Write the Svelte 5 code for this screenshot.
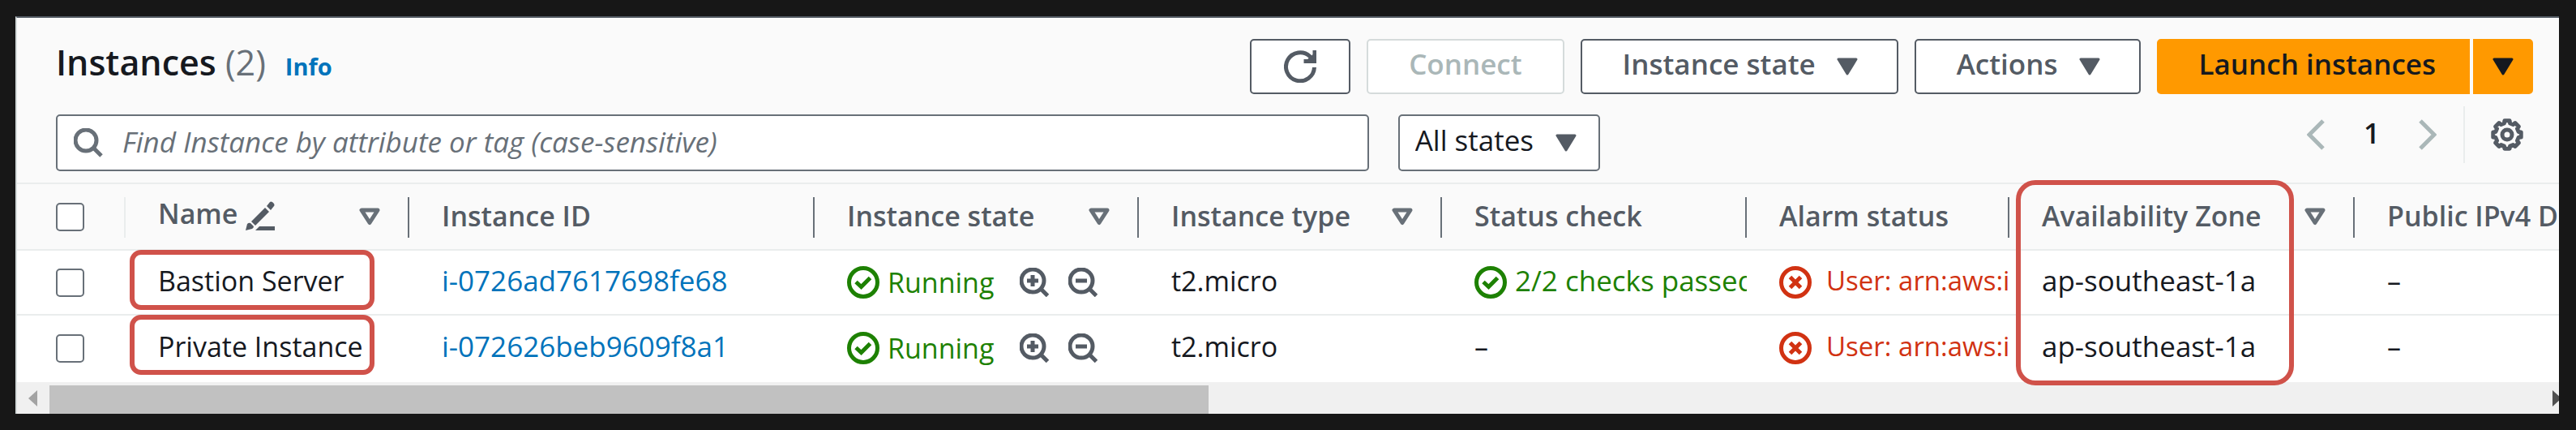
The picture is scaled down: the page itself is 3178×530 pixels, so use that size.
<script>
  const headers = [
    { label: 'Name', edit: true, filter: true },
    { label: 'Instance ID' },
    { label: 'Instance state', filter: true },
    { label: 'Instance type', filter: true },
    { label: 'Status check' },
    { label: 'Alarm status' },
    { label: 'Availability Zone', filter: true, marked: true },
    { label: 'Public IPv4 DNS' }
  ];
  const rows = [
    { name: 'Bastion Server', id: 'i-0726ad7617698fe68', type: 't2.micro', check: '2/2 checks passed', zone: 'ap-southeast-1a' },
    { name: 'Private Instance', id: 'i-072626beb9609f8a1', type: 't2.micro', check: null, zone: 'ap-southeast-1a' }
  ];
  const teeth = 8;
  const point = (r, a) => `${(20 + r * Math.cos(a)).toFixed(2)} ${(20 + r * Math.sin(a)).toFixed(2)}`;
  let gear = '';
  for (let i = 0; i < teeth; i++) {
    const a = (i / teeth) * Math.PI * 2;
    gear += `${i ? 'L' : 'M'}${point(14.5, a - 0.25)}L${point(17.5, a - 0.18)}L${point(17.5, a + 0.18)}L${point(14.5, a + 0.25)}`;
  }
  gear += 'Z';
</script>

{#snippet caret()}
  <svg class="caret" viewBox="0 0 26 22" aria-hidden="true"><path d="M2 2H24L13 20Z" fill="currentColor" stroke="currentColor" stroke-width="3" stroke-linejoin="round" /></svg>
{/snippet}

{#snippet okIcon()}
  <svg class="status" viewBox="0 0 40 40" aria-hidden="true"><circle cx="20" cy="20" r="17.5" /><path d="M11 19.500L17.5 25.500L28.5 14.500" /></svg>
{/snippet}

{#snippet glass(plus)}
  <svg class="glass" viewBox="0 0 36 36" aria-hidden="true"><circle cx="16" cy="16" r="14" /><path d="M26 26L34.500 34.500M9 16H23" />{#if plus}<path d="M16 9V23" />{/if}</svg>
{/snippet}

<main class="page">
  <section class="panel">
    <header class="toolbar">
      <div class="bar">
        <div class="title">
          <h1>Instances <span class="count">(2)</span></h1>
          <a class="info" href="#info">Info</a>
        </div>
        <div class="actions">
          <button class="btn refresh" aria-label="Refresh">
            <svg viewBox="0 0 40 40" aria-hidden="true"><path d="M37.500 21A17.500 17.500 0 1 1 32 7.500L36 12" /><path d="M38 0V13.500H24.500" /><path d="M28 12L37 4V13Z" fill="currentColor" stroke="none" /></svg>
          </button>
          <button class="btn" disabled><span>Connect</span></button>
          <button class="btn menu"><span>Instance state</span>{@render caret()}</button>
          <button class="btn menu"><span>Actions</span>{@render caret()}</button>
          <div class="split">
            <button class="btn primary"><span>Launch instances</span></button>
            <button class="btn primary more" aria-label="More launch options">{@render caret()}</button>
          </div>
        </div>
      </div>
      <div class="filters">
        <label class="search">
          <svg viewBox="0 0 36 36" aria-hidden="true"><circle cx="15" cy="15" r="13" /><path d="M24 24L34 34" /></svg>
          <input type="text" aria-label="Find Instance" placeholder="Find Instance by attribute or tag (case-sensitive)" />
        </label>
        <label class="states">
          <select aria-label="State filter"><option>All states</option></select>
          {@render caret()}
        </label>
        <nav class="pager" aria-label="Pages">
          <button aria-label="Previous page"><svg class="chevron" viewBox="0 0 22 38"><path d="M20 2L3 19L20 36" /></svg></button>
          <span class="current">1</span>
          <button aria-label="Next page"><svg class="chevron" viewBox="0 0 22 38"><path d="M2 2L19 19L2 36" /></svg></button>
          <div class="settings">
            <button aria-label="Preferences"><svg class="gear" viewBox="0 0 40 40"><path d={gear} /><circle cx="20" cy="20" r="6" /></svg></button>
          </div>
        </nav>
      </div>
    </header>

    <table>
      <colgroup>
        <col class="c-select" /><col class="c-name" /><col class="c-id" /><col class="c-state" /><col class="c-type" /><col class="c-check" /><col class="c-alarm" /><col class="c-zone" /><col />
      </colgroup>
      <thead>
        <tr>
          <th class="pick"><input type="checkbox" aria-label="Select all" /></th>
          {#each headers as h}
            <th class:marked={h.marked}>
              <div class="head">
                <span class="label" class:editable={h.edit}>{h.label}
                  {#if h.edit}<svg class="pencil" viewBox="0 0 36 36" aria-hidden="true"><path d="M0 36L2 28Q4 26 6 27L10 31Q10 33 8 34Z" /><path d="M7 25L24 8L29 13L12 30Z" /><path d="M26 6L30 1Q31 0 33 1L35 3Q36 5 35 6L31 11Z" /><path d="M12 36L17 31H36V36Z" /></svg>{/if}
                </span>
                {#if h.filter}<svg class="sort" viewBox="0 0 26 22" aria-hidden="true"><path d="M3 3H23L13 18.500Z" /></svg>{/if}
              </div>
              {#if h.marked}<span class="mark tall"></span>{/if}
            </th>
          {/each}
        </tr>
      </thead>
      <tbody>
        {#each rows as r}
          <tr>
            <td class="pick"><input type="checkbox" aria-label={`Select ${r.name}`} /></td>
            <td class="text named">{r.name}<span class="mark"></span></td>
            <td class="text large"><a href={`#${r.id}`}>{r.id}</a></td>
            <td>
              <div class="cell ok">
                {@render okIcon()}<span>Running</span>
                <button class="zoom first" aria-label="Filter in">{@render glass(true)}</button>
                <button class="zoom" aria-label="Filter out">{@render glass(false)}</button>
              </div>
            </td>
            <td class="text">{r.type}</td>
            {#if r.check}
              <td class="large"><div class="cell ok checks">{@render okIcon()}<span>{r.check}</span></div></td>
            {:else}
              <td class="text">–</td>
            {/if}
            <td class="small">
              <div class="cell bad">
                <svg class="status" viewBox="0 0 40 40" aria-hidden="true"><circle cx="20" cy="20" r="17.5" /><path d="M13.500 13.500L26.500 26.500M26.500 13.500L13.500 26.500" /></svg>
                <span>User: arn:aws:iam</span>
              </div>
            </td>
            <td class="text large">{r.zone}</td>
            <td class="text">–</td>
          </tr>
        {/each}
      </tbody>
    </table>

    <div class="scroll">
      <svg class="arrow" viewBox="0 0 11 20" aria-hidden="true"><path d="M11 0V20L0 10Z" fill="#a3a3a3" /></svg>
      <div class="track"><div class="thumb"></div></div>
      <svg class="arrow end" viewBox="0 0 8 20" aria-hidden="true"><path d="M0 0V20L11 10Z" fill="#505050" /></svg>
    </div>
  </section>
</main>

<style>
  :global(body) { background: #171717; }
  * { box-sizing: border-box; }
  .page {
    padding: 20px 21px 20px 19px;
    font: 34px/46px "Open Sans", "Noto Sans", sans-serif;
    color: #16191f;
  }
  .panel {
    border-top: 2px solid #545b64;
    border-left: 2px solid #d5dbdb;
    background: #fafafa;
    overflow: hidden;
  }
  button, input, select { font: inherit; color: inherit; margin: 0; }
  button { border: 0; background: none; padding: 0; cursor: pointer; }
  svg { display: block; flex: none; fill: none; stroke: currentColor; }
  a { color: #0073bb; text-decoration: none; }

  .toolbar { padding: 26px 32px 14px 48px; border-bottom: 2px solid #eaeded; font-size: 35px; }
  .bar { display: flex; align-items: flex-start; }
  .title { display: flex; align-items: baseline; gap: 24px; }
  h1 { margin: 0; font-size: 43px; line-height: 58px; font-weight: 600; }
  .count { color: #687078; font-weight: 400; }
  .info { font-size: 29px; font-weight: 700; }
  .actions { display: flex; gap: 20px; margin-left: auto; }
  .btn {
    display: flex; align-items: center; justify-content: center; gap: 26px;
    height: 68px; padding: 0 50px; border: 2px solid #545b64; border-radius: 5px;
    background: #fff; color: #545b64; font-weight: 600; white-space: nowrap;
  }
  .btn span { padding-bottom: 6px; }
  .btn:disabled { border-color: #d5dbdb; color: #aab7b8; }
  .menu { padding-right: 48px; }
  .refresh { padding: 0 40px; }
  .refresh svg { width: 40px; height: 40px; stroke-width: 5; }
  .caret { width: 26px; height: 22px; }
  .split { display: flex; gap: 4px; }
  .primary { padding-right: 40px; background: #f90; border-color: #f90; color: #16191f; border-radius: 5px 0 0 5px; }
  .more { padding: 0 22px; border-radius: 0 5px 5px 0; }

  .filters { display: flex; align-items: flex-start; margin-top: 15px; }
  .search, .states {
    display: flex; align-items: center; height: 70px; margin-top: 10px;
    border: 2px solid #687078; border-radius: 5px; background: #fff;
  }
  .search { width: 53%; padding: 0 20px; gap: 24px; color: #687078; }
  .search svg { width: 36px; height: 36px; stroke-width: 5; }
  .search input { flex: 1; min-width: 0; height: 62px; padding: 0 0 4px; border: 0; outline: 0; background: none; }
  .search input::placeholder { color: #687078; font-style: italic; opacity: 1; }
  .states { margin-left: 36px; padding: 0 27px 0 19px; gap: 26px; color: #545b64; }
  .states select { appearance: none; padding: 0 0 6px; border: 0; outline: 0; background: none; color: #16191f; }
  .pager { display: flex; align-items: center; height: 70px; margin-left: auto; color: #aab7b8; }
  .chevron { width: 22px; height: 38px; stroke-width: 5; }
  .current { width: 116px; padding-bottom: 4px; text-align: center; color: #16191f; font-weight: 600; }
  .settings { display: flex; align-items: center; height: 70px; margin-left: 33px; padding: 0 12px 0 32px; border-left: 2px solid #eaeded; color: #545b64; }
  .gear { width: 40px; height: 40px; stroke-width: 5; stroke-linejoin: round; }

  table { width: 100%; table-layout: fixed; border-collapse: separate; border-spacing: 0; }
  .c-select { width: 134px; }
  .c-name { width: 350px; }
  .c-id { width: 500px; }
  .c-state { width: 400px; }
  .c-type { width: 374px; }
  .c-check { width: 376px; }
  .c-alarm { width: 324px; }
  .c-zone { width: 426px; }
  th, td { padding: 0 0 0 40px; text-align: left; white-space: nowrap; overflow: hidden; }
  th { position: relative; height: 82px; border-bottom: 2px solid #eaeded; color: #545b64; font-weight: 600; }
  th:not(:last-child)::after { content: ""; position: absolute; right: 0; top: 16px; width: 2px; height: 50px; background: #687078; }
  th.pick:not(:last-child)::after { background: #eaeded; }
  td { height: 80px; background: #fff; border-bottom: 2px solid #eaeded; }
  tbody tr:last-child td { height: 82px; border-bottom-color: #fff; }
  .text { padding-bottom: 4px; }
  .large { font-size: 35px; }
  .small { font-size: 33px; }
  .pick { padding-left: 48px; }
  input[type="checkbox"] {
    display: block; appearance: none; width: 35px; height: 35px;
    border: 2px solid #687078; border-radius: 5px; background: #fff;
  }
  .head { display: flex; align-items: center; padding-right: 36px; }
  .label { display: flex; align-items: center; gap: 10px; padding-bottom: 2px; }
  .editable { padding-bottom: 8px; }
  .pencil { width: 36px; height: 36px; margin-top: 6px; fill: currentColor; stroke: none; }
  .sort { width: 26px; height: 22px; margin-left: auto; stroke: #687078; stroke-width: 5; stroke-linejoin: round; }
  .marked, .named { position: relative; overflow: visible; }
  .mark {
    position: absolute; left: 5px; top: -1px; z-index: 1; width: 302px; height: 74px;
    border: 6px solid #d0524a; border-radius: 14px; pointer-events: none;
  }
  .tall { left: 8px; top: -5px; width: 343px; height: 253px; border-radius: 24px; }
  .cell { display: flex; align-items: center; overflow: hidden; }
  .status { width: 40px; height: 40px; stroke-width: 5; }
  .status + span { margin-left: 10px; }
  .bad .status + span { margin-left: 18px; }
  .checks span, .bad span { padding-bottom: 4px; }
  .ok { color: #1d8102; }
  .bad { color: #d13212; }
  .zoom { margin-left: 24px; color: #545b64; }
  .first { margin-left: 32px; }
  .glass { width: 36px; height: 36px; stroke-width: 5; }

  .scroll { display: flex; align-items: center; height: 39px; padding-left: 14px; background: #f0f0f0; }
  .arrow { width: 11px; height: 20px; margin-right: 15px; stroke: none; }
  .end { width: 8px; margin-right: 0; }
  .track { flex: 1; height: 35px; align-self: flex-end; }
  .thumb { width: 46.3%; height: 35px; background: #c1c1c1; }
</style>
